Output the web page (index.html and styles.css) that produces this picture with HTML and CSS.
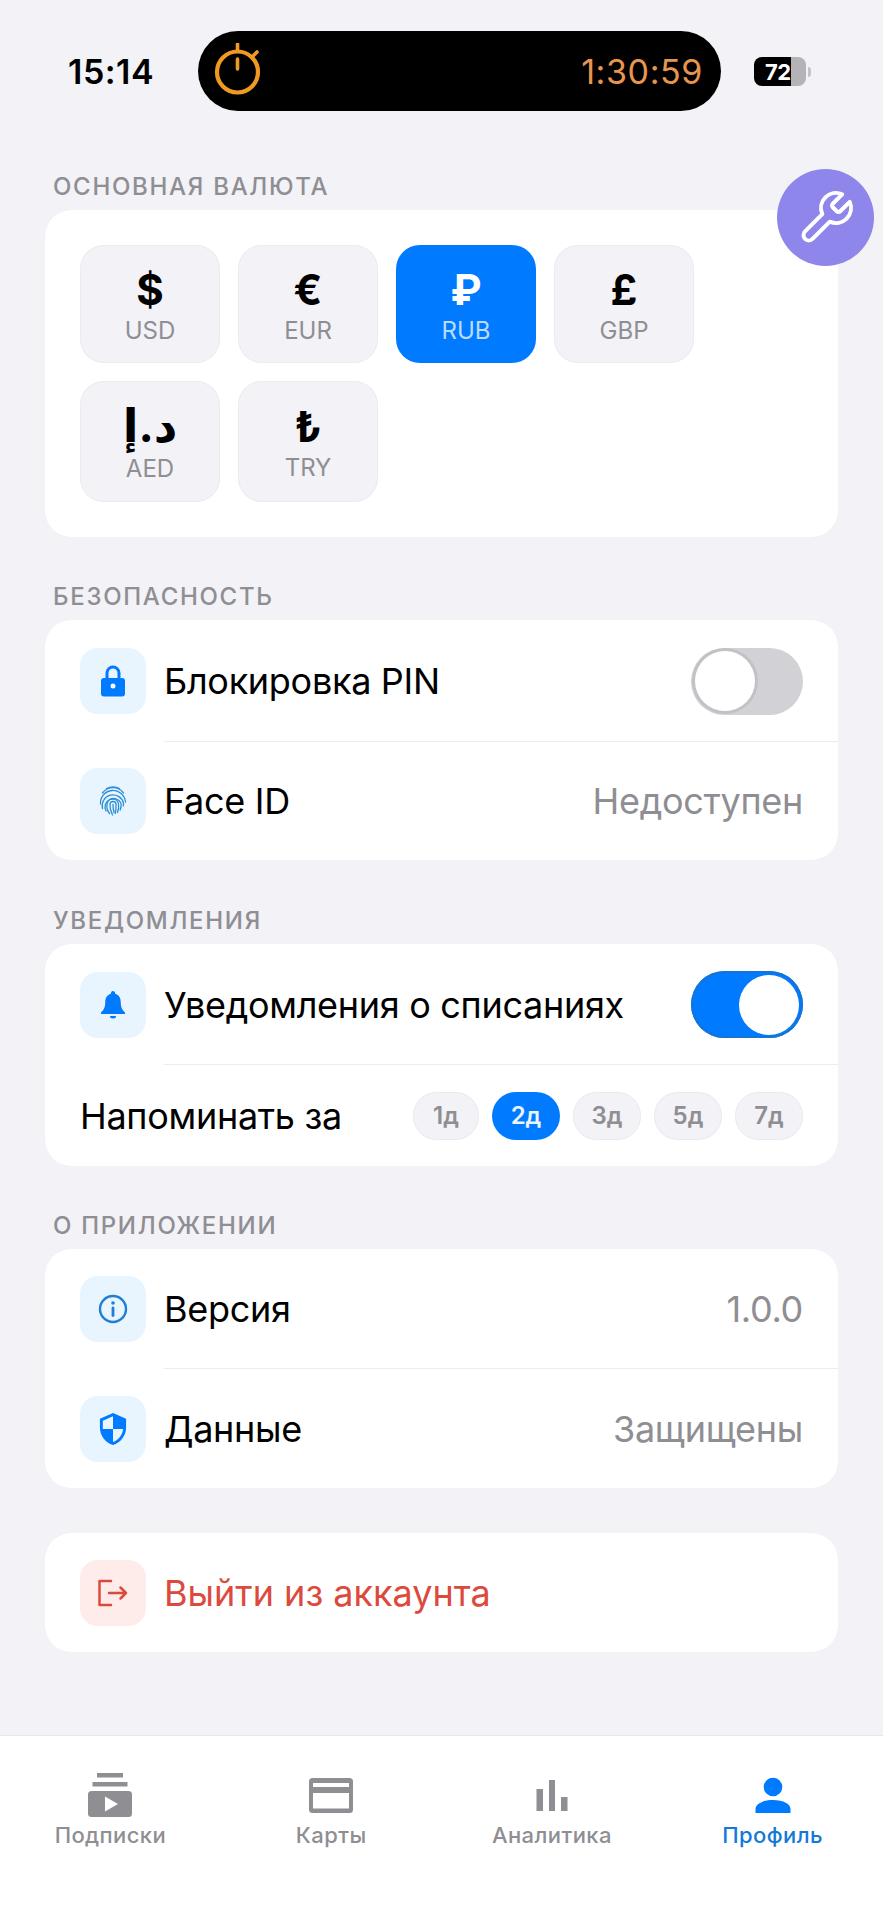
FILE: index.html
```html
<!DOCTYPE html>
<html lang="ru">
<head>
<meta charset="utf-8">
<title>Профиль</title>
<link rel="stylesheet" href="styles.css">
</head>
<body>
<div class="screen">
  <header class="status">
    <span class="clock">15:14</span>
    <div class="island">
      <svg class="stopwatch" viewBox="0 0 47 52" fill="none" stroke="#f09a24">
        <circle cx="23.5" cy="29" r="20.5" stroke-width="4.2"/>
        <path d="M23.5 1v6M43 9l-4.500 4.500M23.500 16v10" stroke-width="3.600" stroke-linecap="round"/>
      </svg>
      <span class="timer">1:30:59</span>
    </div>
    <div class="battery">
      <div class="battery-body"><span class="battery-num">72</span></div>
      <span class="battery-nub"></span>
    </div>
  </header>

  <main class="content">
    <section class="group">
      <h2 class="group-title">ОСНОВНАЯ ВАЛЮТА</h2>
      <div class="card currency-card">
        <div class="currency-row">
          <div class="cur"><span class="cur-sym">$</span><span class="cur-code">USD</span></div>
          <div class="cur"><span class="cur-sym">€</span><span class="cur-code">EUR</span></div>
          <div class="cur cur-on"><span class="cur-sym">₽</span><span class="cur-code">RUB</span></div>
          <div class="cur"><span class="cur-sym">£</span><span class="cur-code">GBP</span></div>
        </div>
        <div class="currency-row">
          <div class="cur cur-tall"><span class="cur-sym cur-sym-ar">د.إ</span><span class="cur-code">AED</span></div>
          <div class="cur cur-tall"><span class="cur-sym">₺</span><span class="cur-code">TRY</span></div>
        </div>
      </div>
    </section>

    <section class="group group-security">
      <h2 class="group-title">БЕЗОПАСНОСТЬ</h2>
      <div class="card">
        <div class="row row-line row-h122">
          <span class="ico"><svg viewBox="0 0 32 32"><path fill="none" stroke="#007aff" stroke-width="3" d="M10 14V8a6 6 0 0 1 12 0v6"/><rect x="4" y="13" width="24" height="18.500" rx="3" fill="#007aff"/><circle cx="16" cy="21" r="2.500" fill="#fff"/></svg></span>
          <span class="label">Блокировка PIN</span>
          <span class="toggle"><span class="thumb"></span></span>
        </div>
        <div class="row row-h118">
          <span class="ico"><svg viewBox="0 0 32 32" fill="none" stroke="#2b8fd6" stroke-width="1.300" stroke-linecap="round"><path d="M9.500 3.500a14.500 14.500 0 0 1 13 0"/><path d="M5.500 8a13 13 0 0 1 21 0"/><path d="M3.500 19a12.500 12.500 0 0 1 25-2"/><path d="M5.500 23.500A10.500 10.500 0 1 1 26.500 18c0 1 0 2-.3 3"/><path d="M9 26a8 8 0 1 1 15-8c.4 2.500 0 5-.8 7"/><path d="M12.500 28.500c-2-2.500-3-5.500-2.500-9a5.800 5.800 0 0 1 11.500-.5c.4 3 0 6-1 8.500"/><path d="M15.500 30c-1.500-3-2.700-6-2.500-10.500a3 3 0 0 1 6 0c.2 3.500 0 6-.8 9"/><path d="M16 19.500c0 3.500.5 6 1 8"/></svg></span>
          <span class="label">Face ID</span>
          <span class="value">Недоступен</span>
        </div>
      </div>
    </section>

    <section class="group">
      <h2 class="group-title">УВЕДОМЛЕНИЯ</h2>
      <div class="card">
        <div class="row row-line row-h121">
          <span class="ico"><svg viewBox="0 0 32 32"><path fill="#007aff" d="M16 2a2.200 2.200 0 0 1 2.100 2.800c3.800 1 5.600 4.200 5.600 8.200 0 5 1.400 8 4.300 10.500V25H4v-1.500C6.900 21 8.300 18 8.300 13c0-4 1.800-7.200 5.600-8.200A2.200 2.200 0 0 1 16 2z"/><path fill="#007aff" d="M13 27h6a3 2.500 0 0 1-6 0z"/></svg></span>
          <span class="label">Уведомления о списаниях</span>
          <span class="toggle toggle-on"><span class="thumb"></span></span>
        </div>
        <div class="row row-remind">
          <span class="label">Напоминать за</span>
          <div class="chips">
            <span class="chip chip-1">1д</span>
            <span class="chip chip-on">2д</span>
            <span class="chip">3д</span>
            <span class="chip">5д</span>
            <span class="chip">7д</span>
          </div>
        </div>
      </div>
    </section>

    <section class="group">
      <h2 class="group-title">О ПРИЛОЖЕНИИ</h2>
      <div class="card">
        <div class="row row-line">
          <span class="ico"><svg viewBox="0 0 32 32" fill="none" stroke="#1f7fd4"><circle cx="16" cy="16" r="13" stroke-width="2.400"/><path d="M16 15v7.500" stroke-width="2.800" stroke-linecap="round"/><circle cx="16" cy="10" r="1.800" fill="#1f7fd4" stroke="none"/></svg></span>
          <span class="label">Версия</span>
          <span class="value">1.0.0</span>
        </div>
        <div class="row row-h119">
          <span class="ico"><svg viewBox="1 1 22 22"><path fill="#007aff" d="M12 1 3 5v6c0 5.550 3.840 10.740 9 12 5.160-1.260 9-6.450 9-12V5l-9-4zm0 10.990h7c-.53 4.120-3.280 7.790-7 8.940V12H5V6.300l7-3.110v8.800z"/></svg></span>
          <span class="label">Данные</span>
          <span class="value">Защищены</span>
        </div>
      </div>
    </section>

    <section class="group group-exit">
      <div class="card">
        <div class="row row-h119">
          <span class="ico ico-red"><svg viewBox="0 0 32 32" fill="none" stroke="#dc4a3e" stroke-width="2.500" stroke-linecap="round" stroke-linejoin="round"><path d="M14 4H2.500v24H14M12 16h17M23.500 10.500l5.500 5.500-5.500 5.500"/></svg></span>
          <span class="label label-red">Выйти из аккаунта</span>
        </div>
      </div>
    </section>
  </main>

  <nav class="tabs">
    <div class="tab">
      <svg class="tab-ico" viewBox="0 0 44 44"><rect x="9" y="0" width="26" height="4.500" fill="#8e8e93"/><rect x="4.500" y="9" width="35" height="4.500" fill="#8e8e93"/><rect x="0" y="18" width="44" height="26" rx="3.500" fill="#8e8e93"/><path d="M17 23.500 30 31 17 38.500z" fill="#fff"/></svg>
      <span>Подписки</span>
    </div>
    <div class="tab">
      <svg class="tab-ico" viewBox="0 0 44 44"><rect x="0" y="5" width="44" height="35" rx="3.500" fill="#8e8e93"/><rect x="4" y="10" width="36" height="4" fill="#fff"/><rect x="4" y="20" width="36" height="15.500" fill="#fff"/></svg>
      <span>Карты</span>
    </div>
    <div class="tab">
      <svg class="tab-ico" viewBox="0 0 44 44"><rect x="6.500" y="16" width="6.500" height="22" fill="#8e8e93"/><rect x="19" y="7" width="6" height="31" fill="#8e8e93"/><rect x="31" y="24" width="6.500" height="14" fill="#8e8e93"/></svg>
      <span>Аналитика</span>
    </div>
    <div class="tab tab-on">
      <svg class="tab-ico" viewBox="0 0 44 44"><circle cx="22" cy="14" r="9.300" fill="#007aff"/><path d="M4.500 40v-4c0-5 7-9 17.500-9s17.500 4 17.500 9v4z" fill="#007aff"/></svg>
      <span>Профиль</span>
    </div>
  </nav>

  <button class="fab" type="button" aria-label="Инструменты">
    <svg viewBox="0 0 24 24" fill="none" stroke="#fff" stroke-width="1.600" stroke-linejoin="round" stroke-linecap="round"><path d="M14.700 6.300a1 1 0 0 0 0 1.400l1.600 1.600a1 1 0 0 0 1.400 0l3.770-3.770a6 6 0 0 1-7.940 7.940l-6.910 6.910a2.120 2.120 0 0 1-3-3l6.910-6.910a6 6 0 0 1 7.940-7.940l-3.760 3.760z"/></svg>
  </button>
</div>
</body>
</html>
```

FILE: styles.css
```css
* { box-sizing: border-box; }
html, body { margin: 0; padding: 0; }
body {
  background: #f2f2f7;
  font-family: Inter, "Noto Sans", "DejaVu Sans", sans-serif;
  color: #000;
}
.screen {
  position: relative;
  width: 883px;
  height: 1920px;
  display: flex;
  flex-direction: column;
  overflow: hidden;
}

.status {
  height: 166px;
  padding: 31px 0 0 68px;
  display: flex;
  align-items: flex-start;
  flex: none;
}
.clock {
  width: 130px;
  margin-top: 23px;
  font-size: 34px;
  line-height: 36px;
  font-weight: 600;
  letter-spacing: .5px;
}
.island {
  width: 523px;
  height: 80px;
  border-radius: 40px;
  background: #000;
  display: flex;
  justify-content: space-between;
  align-items: center;
  padding: 0 18px 0 16px;
}
.stopwatch { width: 47px; height: 52px; margin-top: -4px; }
.timer {
  color: #e8954f;
  font-size: 34px;
  font-weight: 400;
  letter-spacing: .6px;
}
.battery {
  margin: 26px 0 0 33px;
  display: flex;
  align-items: center;
  gap: 2px;
}
.battery-body {
  width: 52px;
  height: 29px;
  border-radius: 8px;
  background: linear-gradient(90deg, #000 72%, #b4b4b8 72%);
  display: flex;
  align-items: center;
  padding-left: 11px;
}
.battery-num { color: #fff; font-size: 22px; font-weight: 700; letter-spacing: -.5px; }
.battery-nub { width: 3px; height: 10px; border-radius: 0 3px 3px 0; background: #c4c4c8; }

.content { flex: 1; padding: 0 45px; }
.group { margin-bottom: 39px; }
.group-security { margin-bottom: 40px; }
.group-exit { margin-top: 45px; }
.group-title {
  margin: 0 0 0 8px;
  height: 44px;
  font-size: 24px;
  line-height: 41px;
  font-weight: 500;
  letter-spacing: 1.700px;
  color: #8e8e93;
}
.card {
  background: #fff;
  border-radius: 26px;
  box-shadow: 0 0 1px rgba(0,0,0,.06);
  overflow: hidden;
}

.currency-card {
  height: 327px;
  padding: 35px 35px 0;
  display: flex;
  flex-direction: column;
  gap: 18px;
}
.currency-row { display: flex; gap: 18px; }
.cur {
  width: 140px;
  height: 118px;
  padding-top: 2px;
  border-radius: 24px;
  background: #f2f2f7;
  box-shadow: inset 0 0 0 1px #ececf0;
  display: flex;
  flex-direction: column;
  align-items: center;
  justify-content: center;
}
.cur-tall { height: 121px; padding-top: 0; }
.cur-sym { font-size: 42px; line-height: 50px; font-weight: 700; }
.cur-sym-ar { font-size: 46px; margin-bottom: 3px; }
.cur-code { font-size: 24px; line-height: 28px; color: #8e8e93; margin-top: 2px; }
.cur-on { background: #007aff; box-shadow: none; }
.cur-on .cur-sym { color: #fff; }
.cur-on .cur-code { color: #bcdcff; }

.row {
  height: 120px;
  padding: 0 35px;
  display: flex;
  align-items: center;
  position: relative;
}
.row-line::after {
  content: "";
  position: absolute;
  left: 119px;
  right: 0;
  bottom: 0;
  height: 1px;
  background: #ececf0;
}
.row-h122 { height: 122px; }
.row-h121 { height: 121px; }
.row-h119 { height: 119px; }
.row-h118 { height: 118px; }
.row-remind { height: 101px; }
.ico {
  width: 66px;
  height: 66px;
  flex: none;
  border-radius: 18px;
  background: #e8f4fe;
  display: flex;
  align-items: center;
  justify-content: center;
  margin-right: 18px;
}
.ico svg { width: 32px; height: 32px; }
.ico-red { background: #fdecea; }
.label { font-size: 36px; font-weight: 400; letter-spacing: -.3px; flex: 1; white-space: nowrap; }
.label-red { color: #dc4a3e; letter-spacing: 0; }
.value { font-size: 36px; color: #8e8e93; letter-spacing: -.3px; }

.toggle {
  width: 112px;
  height: 67px;
  border-radius: 34px;
  background: #d1d1d6;
  display: flex;
  align-items: center;
  padding: 0 4px;
  flex: none;
}
.thumb {
  width: 60px;
  height: 60px;
  border-radius: 50%;
  background: #fff;
  box-shadow: 0 0 0 3px #c2c2c6;
}
.toggle-on {
  background: #007aff;
  justify-content: flex-end;
  box-shadow: inset 0 0 0 2px #1475d6;
}
.toggle-on .thumb { box-shadow: none; }

.chips { display: flex; gap: 13px; }
.chip {
  min-width: 68px;
  height: 48px;
  padding: 0 8px;
  border-radius: 24px;
  background: #f2f2f7;
  box-shadow: inset 0 0 0 1px #ebebef;
  display: flex;
  align-items: center;
  justify-content: center;
  font-size: 24px;
  font-weight: 600;
  color: #8e8e93;
}
.chip-1 { min-width: 66px; }
.chip-on { background: #007aff; color: #eaf4ff; box-shadow: none; }

.tabs {
  flex: none;
  height: 185px;
  background: #fff;
  border-top: 1px solid #e6e6eb;
  display: grid;
  grid-template-columns: repeat(4, 1fr);
  padding-top: 37px;
}
.tab {
  display: flex;
  flex-direction: column;
  align-items: center;
  font-size: 22px;
  line-height: 28px;
  font-weight: 500;
  letter-spacing: .4px;
  color: #8e8e93;
}
.tab-ico { width: 44px; height: 44px; margin-bottom: 4px; }
.tab-on { color: #1479d8; }

.fab {
  position: absolute;
  left: 777px;
  top: 169px;
  width: 97px;
  height: 97px;
  border: 0;
  padding: 0;
  border-radius: 50%;
  background: #8f86ec;
  display: flex;
  align-items: center;
  justify-content: center;
}
.fab svg { width: 60px; height: 60px; }
```
